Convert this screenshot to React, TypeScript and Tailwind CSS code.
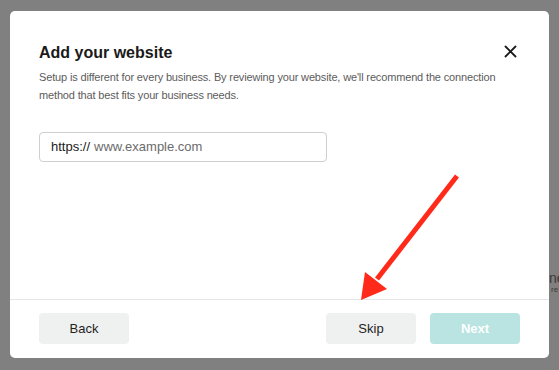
export default function App() {
  return (
    <div
      className="relative w-[559px] h-[370px] overflow-hidden bg-[#808080] pt-[11px] pl-[10px]"
      style={{ fontFamily: '"Liberation Sans", Arial, sans-serif' }}
    >
      {/* page text peeking out behind the modal */}
      <span className="absolute left-[549px] top-[268px] text-[14px] text-[#3a3a3a]">ne</span>
      <span className="absolute left-[551px] top-[286px] text-[8px] leading-[8px] text-[#3a3a3a]">re</span>

      <div className="relative w-[539px] h-[347px] bg-white rounded-[5px] flex flex-col">
        <div className="flex-1 px-[29px] pt-[32px]">
          <div className="flex items-start justify-between h-[20px]">
            <h2 className="text-[16px] leading-[20px] font-bold text-[#1a1a1a]">Add your website</h2>
            <button className="mt-[2px] mr-[3px] text-[#1a1a1a]">
              <svg width="13" height="13" viewBox="0 0 13 13" fill="none" stroke="currentColor" strokeWidth={1.8} strokeLinecap="round">
                <path d="M1.5 1.5l10 10M11.5 1.5l-10 10" />
              </svg>
            </button>
          </div>
          <p className="mt-[5px] text-[11px] leading-[18px] tracking-[-0.15px] text-[#5c5c5c] whitespace-nowrap">
            Setup is different for every business. By reviewing your website, we'll recommend the connection
            <br />
            method that best fits your business needs.
          </p>
          <div className="mt-[28px] w-[288px] h-[30px] border border-[#cfcfcf] rounded-[4px] flex items-center px-[11px] text-[13px]">
            <span className="text-[#1a1a1a]">https://</span>
            <span className="ml-[4px] text-[#6b6b6b]">www.example.com</span>
          </div>
        </div>

        <div className="border-t border-[#e6e6e6] h-[59px] flex items-center justify-between px-[29px] pb-[1px]">
          <button className="w-[90px] h-[31px] rounded-[4px] bg-[#eff0f0] text-[13px] text-[#1f1f1f]">Back</button>
          <div className="flex gap-[14px]">
            <button className="w-[90px] h-[31px] rounded-[4px] bg-[#eff0f0] text-[13px] text-[#1f1f1f]">Skip</button>
            <button className="w-[90px] h-[31px] rounded-[4px] bg-[#b9e4e1] text-[13px] font-bold text-white">Next</button>
          </div>
        </div>
      </div>

      {/* annotation arrow */}
      <svg className="absolute left-0 top-0 pointer-events-none" width="559" height="370" viewBox="0 0 559 370">
        <line x1="457" y1="176" x2="377" y2="279" stroke="#ff2a1a" strokeWidth={5} />
        <polygon points="361,300 365,272 387,289" fill="#ff2a1a" />
      </svg>
    </div>
  );
}
